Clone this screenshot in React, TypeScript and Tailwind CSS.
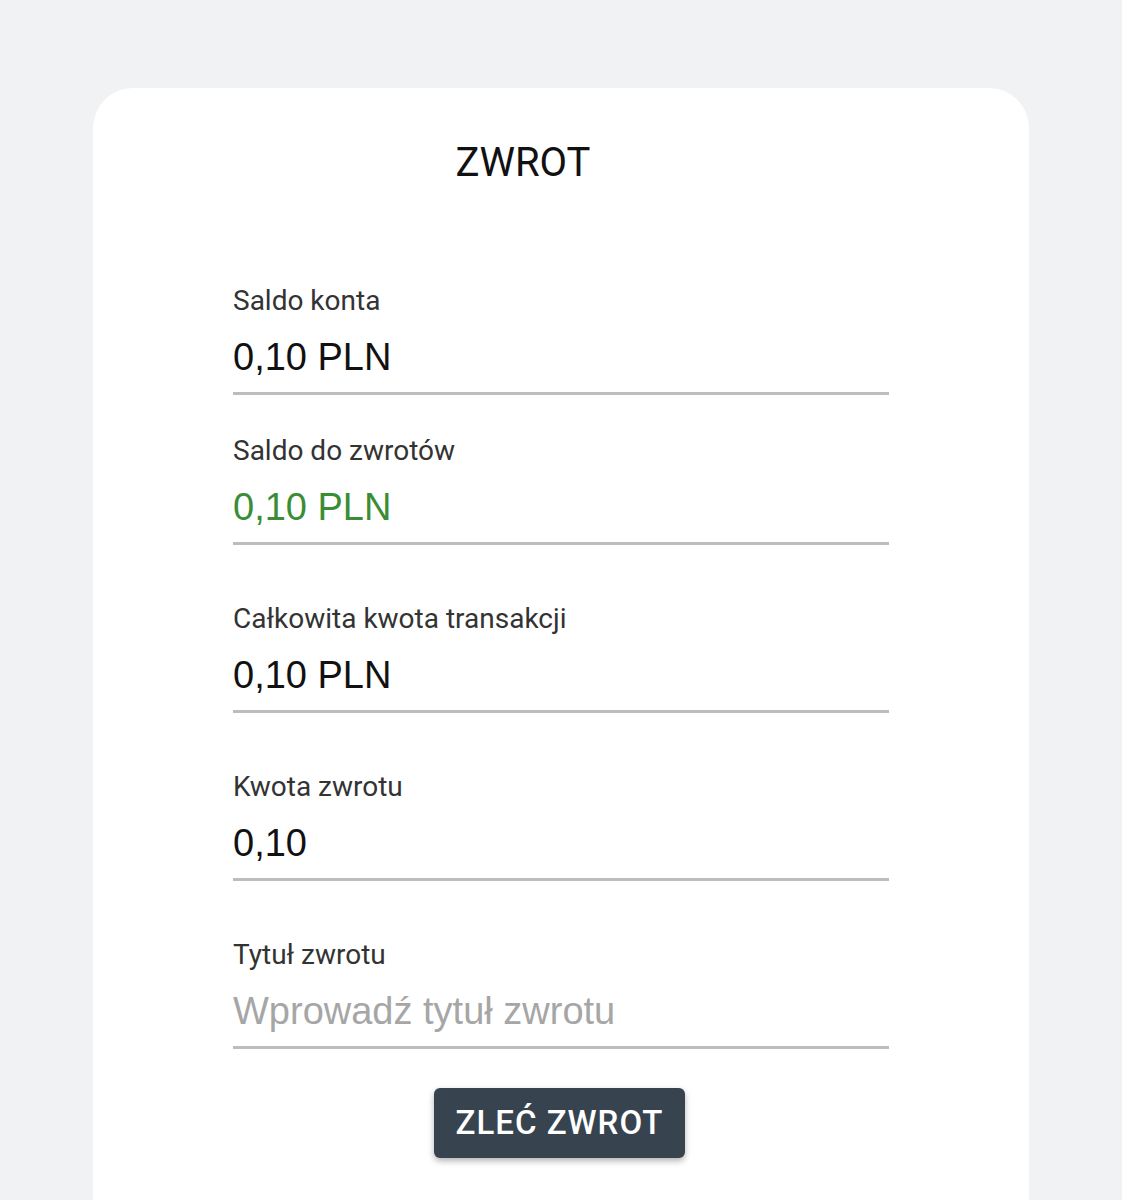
import React from "react";

const Field = ({ label, value, className = "", valueClass = "text-[#111]" }: { label: string; value: string; className?: string; valueClass?: string }) => (
  <div className={className}>
    <div className="h-[40px] leading-[40px] text-[28px] text-[#333] font-['Roboto',sans-serif]">{label}</div>
    <div className={`mt-2 h-[56px] leading-[56px] text-[38px] font-['Liberation_Sans',Arial,sans-serif] ${valueClass}`}>{value}</div>
    <div className="mt-[7px] h-[3px] bg-[#bdbdbd]" />
  </div>
);

export default function App() {
  return (
    <div className="min-h-[1200px] bg-[#f1f2f4] px-[93px] pt-[88px]">
      <div className="h-[1112px] rounded-t-[40px] bg-white px-[140px]">
        <div className="pt-[55px] pr-[76px] text-center text-[40px] leading-[40px] text-[#111] font-['Roboto',sans-serif]">ZWROT</div>
        <Field className="mt-[98px]" label="Saldo konta" value="0,10 PLN" />
        <Field className="mt-[36px]" label="Saldo do zwrotów" value="0,10 PLN" valueClass="text-[#3a8d35]" />
        <Field className="mt-[54px]" label="Całkowita kwota transakcji" value="0,10 PLN" />
        <Field className="mt-[54px]" label="Kwota zwrotu" value="0,10" />
        <Field className="mt-[54px]" label="Tytuł zwrotu" value="Wprowadź tytuł zwrotu" valueClass="text-[#a6a6a6]" />
        <div className="mt-[39px] flex justify-center pr-[3px]">
          <button className="h-[70px] w-[251px] rounded-[6px] bg-[#37444f] text-[33px] font-medium text-white shadow-[0_3px_6px_rgba(0,0,0,0.3)] font-['Roboto',sans-serif] tracking-[1px]">
            ZLEĆ ZWROT
          </button>
        </div>
      </div>
    </div>
  );
}
